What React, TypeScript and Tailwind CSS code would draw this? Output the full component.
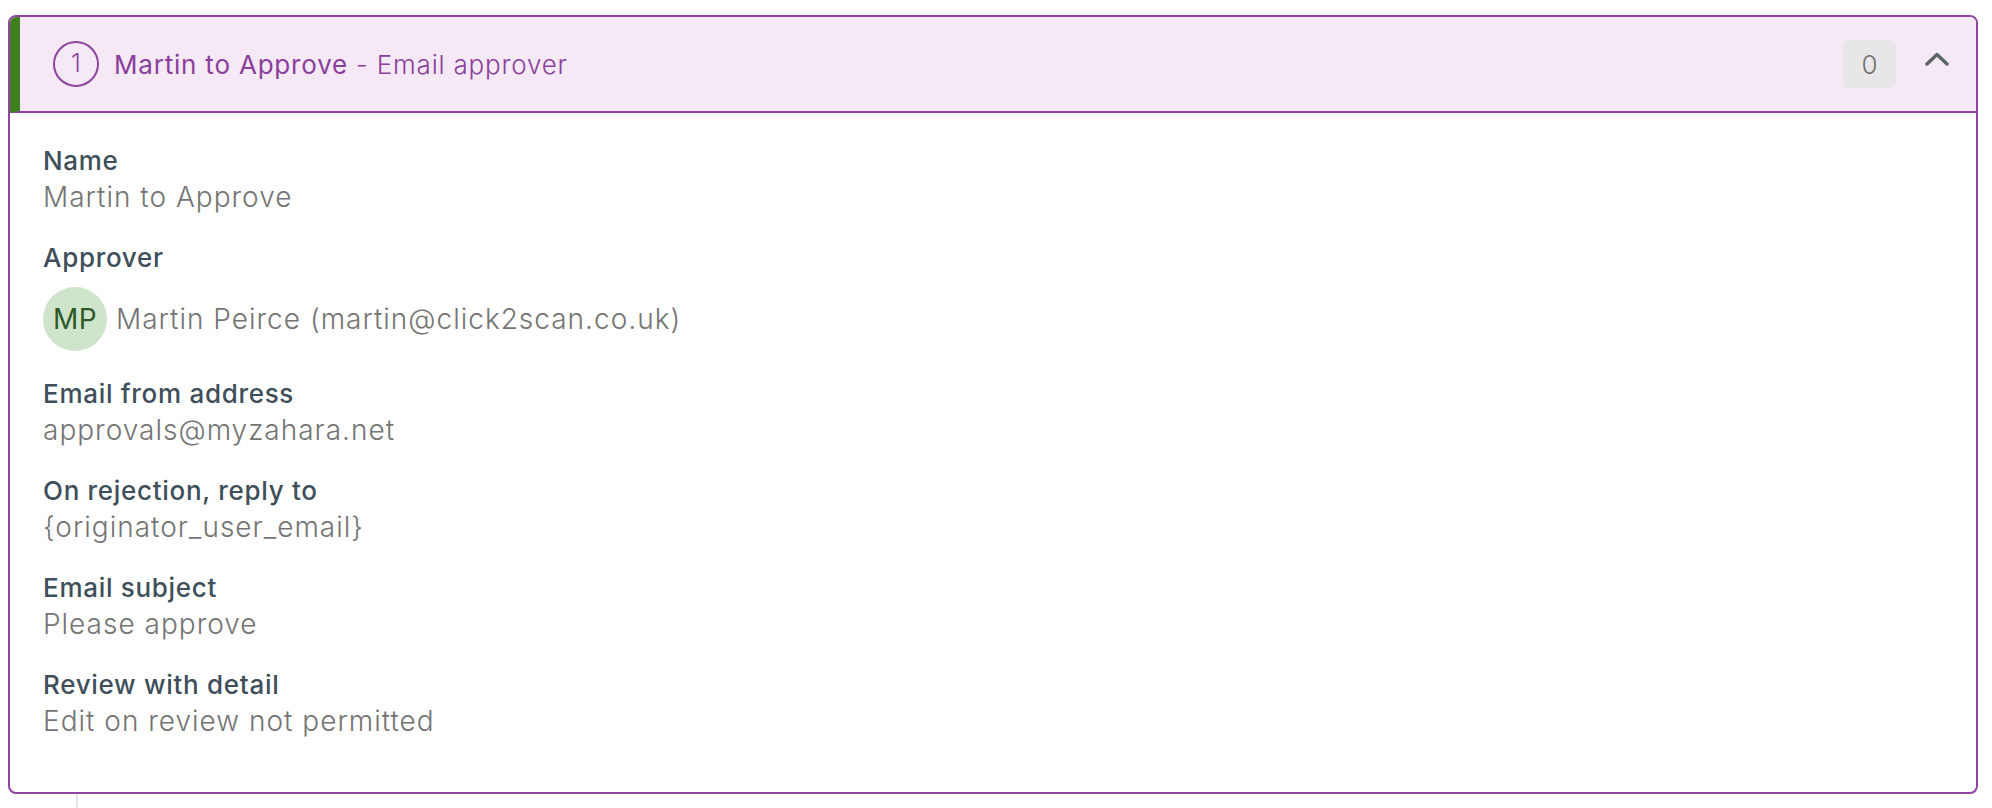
const campos = [
  { rotulo: "Name", valor: "Martin to Approve" },
  { rotulo: "Approver", valor: "" },
  { rotulo: "Email from address", valor: "approvals@myzahara.net" },
  { rotulo: "On rejection, reply to", valor: "{originator_user_email}" },
  { rotulo: "Email subject", valor: "Please approve" },
  { rotulo: "Review with detail", valor: "Edit on review not permitted" },
];

function Aprovador() {
  return (
    <div className="flex items-center gap-[9px] mt-[11px]">
      <div className="w-[64px] h-[64px] rounded-full bg-[#cfe5cb] flex items-center justify-center text-[28px] tracking-[0.5px] text-[#2f5a27]">
        MP
      </div>
      <span className="text-[28px] leading-[36px] tracking-[1px] font-light text-[#747474]">
        Martin Peirce (martin@click2scan.co.uk)
      </span>
    </div>
  );
}

export default function App() {
  return (
    <div className="min-h-[808px] bg-white pt-[15px] pl-[8px] pr-[14px] font-['Inter',sans-serif]">
      <div className="border-2 border-[#8e44a0] rounded-[8px] overflow-hidden">
        {/* cabeçalho */}
        <div className="flex items-center h-[96px] bg-[#f4e9f5] border-l-[10px] border-l-[#3f7f1f] border-b-2 border-b-[#8e44a0] pl-[33px] pr-[27px]">
          <div className="w-[46px] h-[46px] rounded-full border-2 border-[#8e44a0] flex items-center justify-center text-[25px] font-light text-[#8e44a0]">
            1
          </div>
          <div className="ml-[15px] text-[26px] tracking-[0.8px] text-[#8b3f9c]">
            Martin to Approve
            <span className="font-light"> - Email approver</span>
          </div>
          <div className="ml-auto flex items-center gap-[29px]">
            <div className="w-[53px] h-[48px] rounded-[6px] bg-[#e8e6e8] flex items-center justify-center text-[26px] font-light text-[#6f6f6f]">
              0
            </div>
            <svg width="24" height="14" viewBox="0 0 24 14" fill="none" className="mb-[10px]">
              <polyline
                points="2,12 12,2.5 22,12"
                stroke="#5b6766"
                strokeWidth="3.5"
                strokeLinecap="round"
                strokeLinejoin="round"
              />
            </svg>
          </div>
        </div>

        {/* corpo */}
        <div className="flex flex-col gap-[25px] pl-[33px] pt-[30px] pb-[53px]">
          {campos.map((c) => (
            <div key={c.rotulo} className="flex flex-col">
              <span className="text-[26px] leading-[36px] tracking-[0.7px] font-medium text-[#3e4f5b]">
                {c.rotulo}
              </span>
              {c.rotulo === "Approver" ? (
                <Aprovador />
              ) : (
                <span className="text-[28px] leading-[36px] tracking-[1px] font-light text-[#747474]">
                  {c.valor}
                </span>
              )}
            </div>
          ))}
        </div>
      </div>
      <div className="ml-[68px] w-[2px] h-[20px] bg-[#e6e6e6]" />
    </div>
  );
}
